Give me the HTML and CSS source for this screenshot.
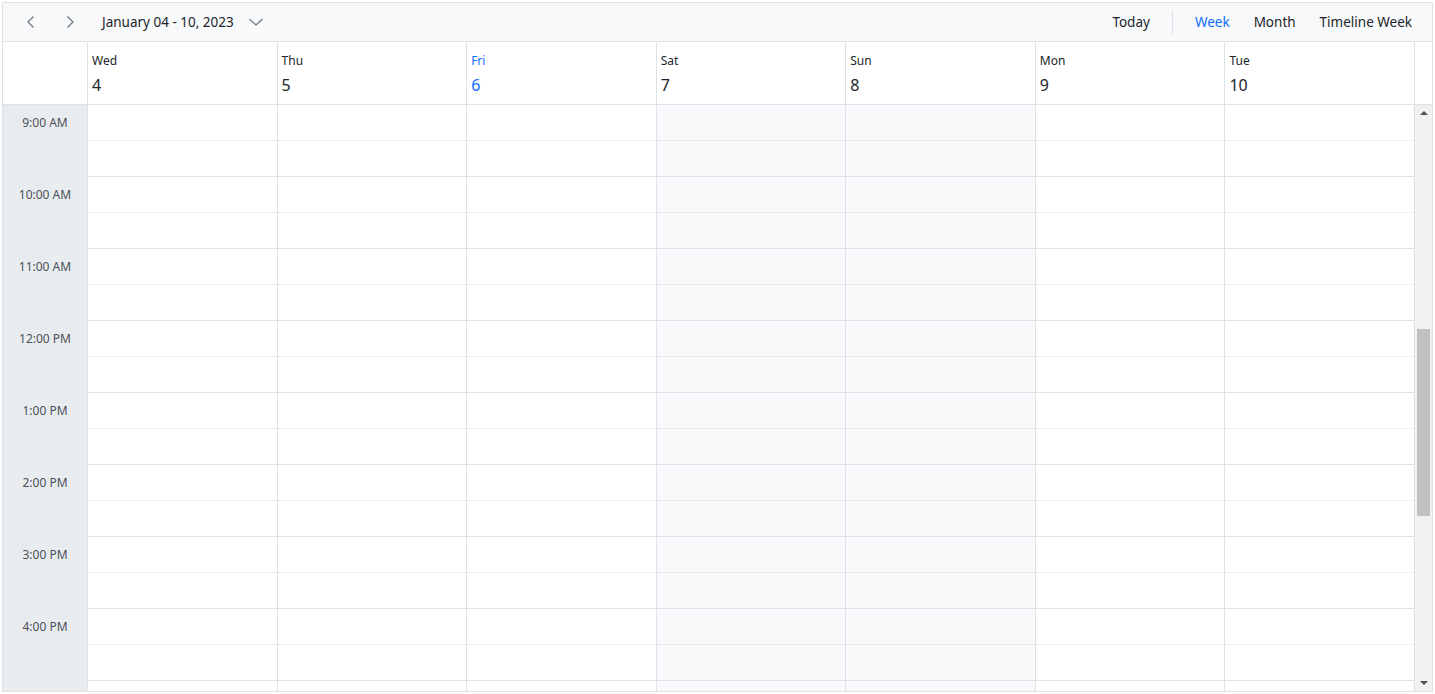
FILE: index.html
```html
<!DOCTYPE html>
<html lang="en">
<head>
    <meta charset="UTF-8">
    <meta name="viewport" content="width=device-width, initial-scale=1.0">
    <title>Scheduler - Week</title>
    <link rel="stylesheet" href="styles.css">
</head>
<body>
    <div class="scheduler">
        <div class="toolbar">
            <div class="toolbar-left">
                <button class="icon-button" aria-label="Previous">
                    <svg viewBox="0 0 16 16"><path d="M10.5 2.5 5 8l5.5 5.5"/></svg>
                </button>
                <button class="icon-button" aria-label="Next">
                    <svg viewBox="0 0 16 16"><path d="M5.5 2.5 11 8l-5.5 5.5"/></svg>
                </button>
                <button class="date-range">
                    <span>January 04 - 10, 2023</span>
                    <svg class="caret" viewBox="0 0 16 16"><path d="M1.5 5 8 11l6.5-6"/></svg>
                </button>
            </div>
            <div class="toolbar-right">
                <button class="view-button">Today</button>
                <span class="separator"></span>
                <button class="view-button active">Week</button>
                <button class="view-button">Month</button>
                <button class="view-button">Timeline Week</button>
            </div>
        </div>

        <div class="header-row">
            <div class="corner"></div>
            <div class="day-headers" id="day-headers"></div>
            <div class="gutter"></div>
        </div>

        <div class="content-row">
            <div class="time-col" id="time-col"></div>
            <div class="day-grid" id="day-grid"></div>
            <div class="scrollbar">
                <span class="arrow up"></span>
                <div class="track"><div class="thumb"></div></div>
                <span class="arrow down"></span>
            </div>
        </div>
    </div>

    <script>
        // Week of Jan 4 - 10, 2023
        const days = [
            { name: 'Wed', date: 4 },
            { name: 'Thu', date: 5 },
            { name: 'Fri', date: 6, today: true },
            { name: 'Sat', date: 7, weekend: true },
            { name: 'Sun', date: 8, weekend: true },
            { name: 'Mon', date: 9 },
            { name: 'Tue', date: 10 }
        ];
        const hours = ['9:00 AM', '10:00 AM', '11:00 AM', '12:00 PM', '1:00 PM', '2:00 PM', '3:00 PM', '4:00 PM', ''];

        const dayHeaders = document.getElementById('day-headers');
        const timeCol = document.getElementById('time-col');
        const dayGrid = document.getElementById('day-grid');

        days.forEach(day => {
            const head = document.createElement('div');
            head.className = 'day-head' + (day.today ? ' today' : '');
            head.innerHTML = `<div class="day-name">${day.name}</div><div class="day-date">${day.date}</div>`;
            dayHeaders.appendChild(head);

            const col = document.createElement('div');
            col.className = 'day-col' + (day.weekend ? ' weekend' : '');
            hours.forEach(() => {
                col.insertAdjacentHTML('beforeend', '<div class="slot half"></div><div class="slot"></div>');
            });
            dayGrid.appendChild(col);
        });

        hours.forEach(label => {
            const cell = document.createElement('div');
            cell.className = 'time-cell';
            cell.textContent = label;
            timeCol.appendChild(cell);
        });
    </script>
</body>
</html>
```

FILE: styles.css
```css
* {
    margin: 0;
    padding: 0;
    box-sizing: border-box;
}

body {
    font-family: 'Segoe UI', 'Noto Sans', sans-serif;
    color: #212529;
    background: #fff;
    padding: 2px 2px 3px 2px;
    height: 100vh;
    overflow: hidden;
}

button {
    font: inherit;
    color: inherit;
    background: none;
    border: none;
    cursor: pointer;
}

.scheduler {
    border: 1px solid #dee2e6;
    height: 690px;
    display: flex;
    flex-direction: column;
    overflow: hidden;
}

/* toolbar */

.toolbar {
    height: 39px;
    flex-shrink: 0;
    background: #f8f9fa;
    border-bottom: 1px solid #dee2e6;
    display: flex;
    align-items: center;
    justify-content: space-between;
}

.toolbar-left {
    display: flex;
    align-items: center;
    padding-left: 14px;
}

.icon-button {
    width: 28px;
    height: 28px;
    margin-right: 11px;
    display: flex;
    align-items: center;
    justify-content: center;
}

.icon-button svg {
    width: 16px;
    height: 16px;
    fill: none;
    stroke: #6c757d;
    stroke-width: 1.2;
}

.date-range {
    display: flex;
    align-items: center;
    gap: 14px;
    font-size: 13.5px;
    margin-left: 1px;
    padding: 0 6px;
}

.caret {
    width: 16px;
    height: 16px;
    fill: none;
    stroke: #6c757d;
    stroke-width: 1.2;
}

.toolbar-right {
    display: flex;
    align-items: center;
    padding-right: 8px;
}

.view-button {
    font-size: 13.5px;
    padding: 0 12px;
    height: 28px;
}

.view-button.active {
    color: #0d6efd;
}

.separator {
    width: 1px;
    height: 23px;
    background: #dee2e6;
    margin: 0 10px;
}

/* header */

.header-row {
    display: flex;
    height: 63px;
    flex-shrink: 0;
    border-bottom: 1px solid #dee2e6;
}

.corner {
    width: 85px;
    border-right: 1px solid #dee2e6;
}

.day-headers {
    flex: 1;
    display: grid;
    grid-template-columns: repeat(7, 1fr);
}

.day-head {
    border-right: 1px solid #dee2e6;
    padding: 11px 0 0 4px;
}

.day-name {
    font-size: 12px;
    line-height: 16px;
}

.day-date {
    font-size: 16px;
    line-height: 22px;
    margin-top: 5px;
}

.day-head.today {
    color: #0d6efd;
}

.gutter {
    width: 17px;
}

/* content */

.content-row {
    flex: 1;
    display: flex;
    overflow: hidden;
}

.time-col {
    width: 85px;
    background: #e9ecef;
    border-right: 1px solid #dee2e6;
}

.time-cell {
    height: 72px;
    font-size: 12px;
    line-height: 16px;
    color: #495057;
    text-align: center;
    padding-top: 10px;
}

.day-grid {
    flex: 1;
    display: grid;
    grid-template-columns: repeat(7, 1fr);
    align-items: start;
}

.day-col {
    border-right: 1px solid #dee2e6;
}

.day-col.weekend {
    background: #f8f9fa;
}

.slot {
    height: 36px;
    border-bottom: 1px solid #dee2e6;
}

.slot.half {
    border-bottom: 1px dotted #dee2e6;
}

/* scrollbar */

.scrollbar {
    width: 17px;
    background: #f1f1f1;
    display: flex;
    flex-direction: column;
    align-items: center;
}

.arrow {
    width: 0;
    height: 0;
    border-left: 4px solid transparent;
    border-right: 4px solid transparent;
    margin: 6px 0;
}

.arrow.up {
    border-bottom: 4px solid #505050;
}

.arrow.down {
    border-top: 4px solid #505050;
}

.track {
    flex: 1;
    width: 100%;
    padding-top: 208px;
    display: flex;
    justify-content: center;
}

.thumb {
    width: 13px;
    height: 187px;
    background: #c1c1c1;
}
```
